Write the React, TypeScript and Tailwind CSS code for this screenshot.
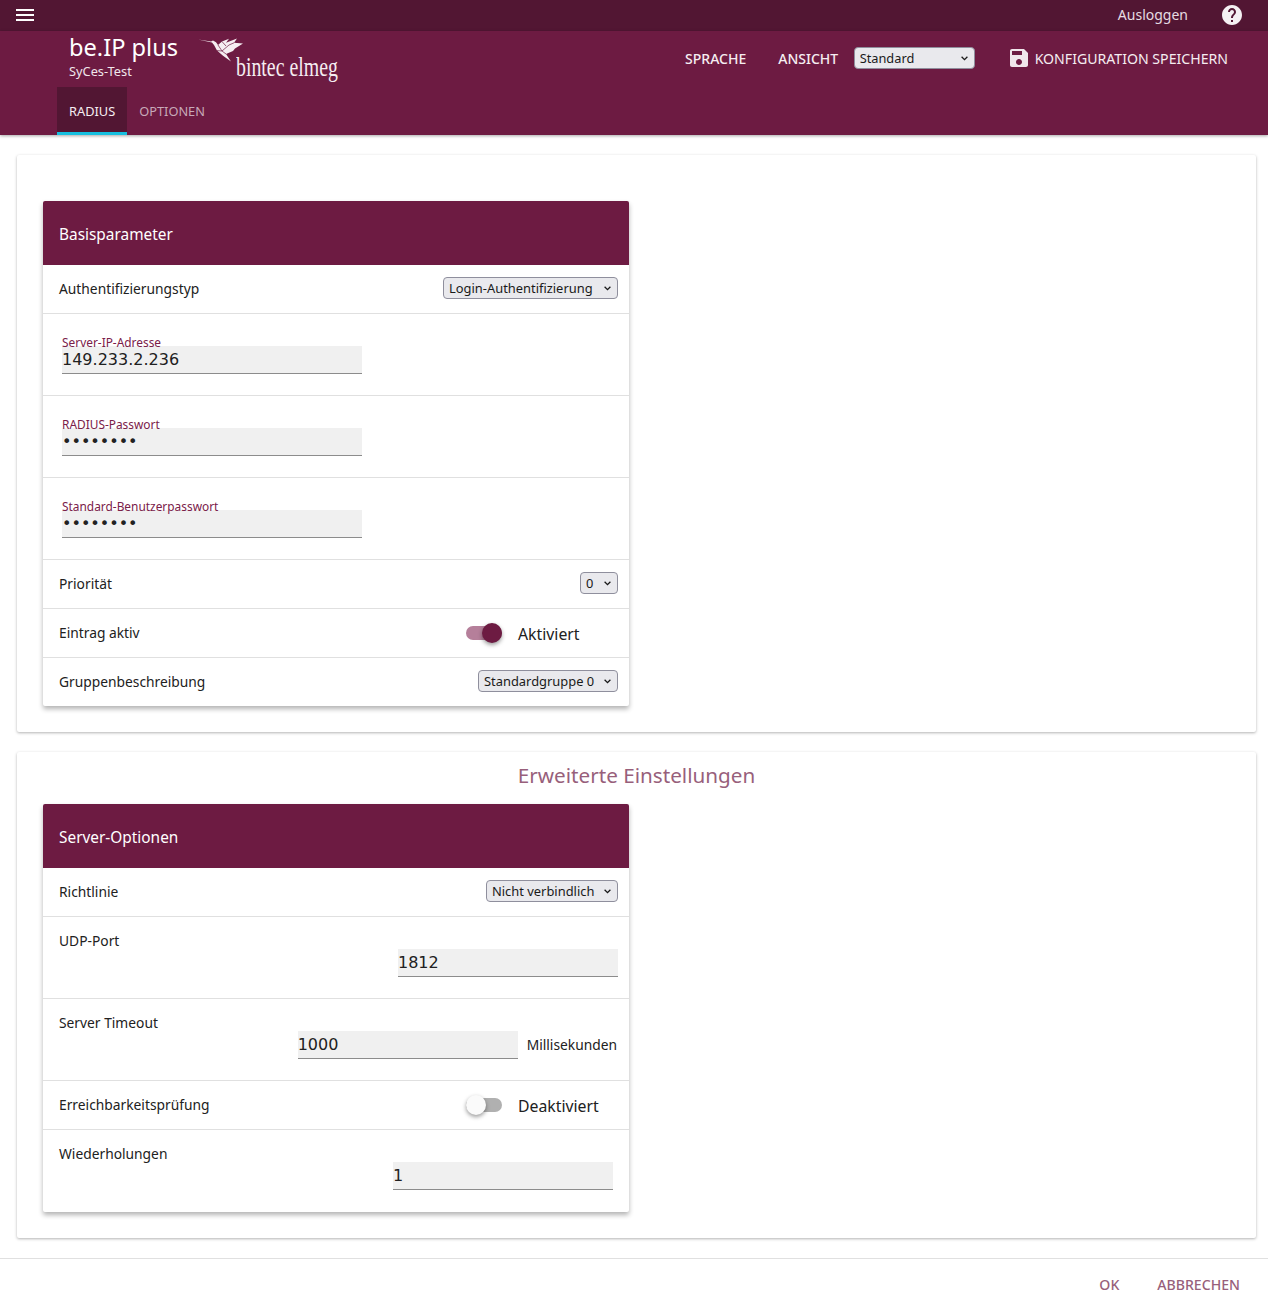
import React from "react";

const sans = "font-['Noto_Sans','Open_Sans',sans-serif]";

function Chevron() {
  return (
    <svg className="pointer-events-none absolute right-[7px] top-[9px]" width="7" height="5" viewBox="0 0 7 5" fill="none" stroke="#1a1a1a" strokeWidth="1.3">
      <path d="M0.6 0.8 L3.5 3.7 L6.4 0.8" />
    </svg>
  );
}

function NativeSelect({ value, w, size = "text-[12.9px]" }: { value: string; w: string; size?: string }) {
  return (
    <div className={`relative ${w} h-[22px]`}>
      <select
        defaultValue={value}
        className={`h-[22px] w-full appearance-none rounded-[4px] border border-[#8f8f9d] bg-[#e9e9ed] pl-[5px] pt-[1px] font-normal ${size} text-[#1a1a1a] font-['Noto_Sans',sans-serif] outline-none`}
      >
        <option>{value}</option>
      </select>
      <Chevron />
    </div>
  );
}

function Row({ label, children, last }: { label: string; children?: React.ReactNode; last?: boolean }) {
  return (
    <div className={`flex items-center justify-between pb-[2px] pl-4 pr-[11px] text-[13.8px] text-[#212121] ${last ? "h-[48px]" : "h-[49px] border-b border-[#e0e0e0]"}`}>
      <span className="mt-[2px]">{label}</span>
      {children}
    </div>
  );
}

function FloatField({ label, value, password }: { label: string; value: string; password?: boolean }) {
  return (
    <div className="h-[82px] border-b border-[#e0e0e0] pl-[19px] pt-8">
      <div className="relative w-[300px]">
        <span className="absolute -top-[12px] left-0 text-[11.9px] leading-[16px] text-[#7a2049]">{label}</span>
        <input
          readOnly
          type={password ? "password" : "text"}
          value={value}
          className="block h-[28px] w-full border-b border-[#8c8c8c] bg-[#f0f0f0] text-[16px] text-[#212121] font-['DejaVu_Sans',sans-serif] outline-none"
        />
      </div>
    </div>
  );
}

function Toggle({ on, label }: { on: boolean; label: string }) {
  return (
    <div className="mt-[2px] flex w-[152px] items-center">
      <div className={`relative h-[14px] w-9 rounded-full ${on ? "bg-[#b57f9a]" : "bg-[#b0b0b0]"}`}>
        <span
          className={`absolute -top-[3px] h-5 w-5 rounded-full shadow-[0_2px_4px_rgba(0,0,0,0.4)] ${on ? "right-0 bg-[#6d1b42]" : "left-0 bg-[#fafafa]"}`}
        />
      </div>
      <span className="ml-4 mt-1 text-[15.8px] text-[#212121]">{label}</span>
    </div>
  );
}

function NumField({ label, value, w, pr, unit, last }: { label: string; value: string; w: string; pr: string; unit?: string; last?: boolean }) {
  return (
    <div className={`flex h-[82px] justify-between pl-4 ${pr} ${last ? "" : "border-b border-[#e0e0e0]"}`}>
      <span className="pt-[14px] text-[13.8px] leading-[19px] text-[#212121]">{label}</span>
      <div className="mt-8 flex items-center self-start">
        <input
          readOnly
          value={value}
          className={`${w} block h-[28px] border-b border-[#8c8c8c] bg-[#f0f0f0] text-[16px] text-[#212121] font-['DejaVu_Sans',sans-serif] outline-none`}
        />
        {unit && <span className="ml-[9px] text-[13.8px] text-[#212121]">{unit}</span>}
      </div>
    </div>
  );
}

function Panel({ title, children }: { title: string; children: React.ReactNode }) {
  return (
    <div className="w-[586px] overflow-hidden rounded-[2px] bg-white shadow-[0_3px_5px_rgba(0,0,0,0.3)]">
      <div className="flex h-16 items-center bg-[#6d1b42] pl-4 pt-1 text-[15.4px] text-white">{title}</div>
      {children}
    </div>
  );
}

function Logo() {
  return (
    <div className="ml-[20px] flex h-[56px] w-[140px] flex-col">
      <svg width="46" height="25" viewBox="0 0 46 25" className="-mb-[11px] mt-[7px] shrink-0">
        <path d="M0 1.6 L13 3.6 L15 2.6 L18 4.2 L20 7 L24 3.6 L31 0.8 L28 4.8 L39 0.4 L36 4.8 L45 5.6 L37 10.6 L35 13 L28 16 L33 23.6 L25 17.8 L19 12.6 L16 7 L14 4.4 Z" fill="#f5edf1" />
        <path d="M20 7 L24 13 L28 16 M24 13 L31 7 M19 12.6 L24 13 M24 3.6 L28 8 M36 4.8 L31 7" stroke="#6d1b42" strokeWidth="0.7" fill="none" />
      </svg>
      <span className="ml-[38px] origin-left scale-x-[0.735] whitespace-nowrap font-['Liberation_Serif',serif] text-[27px] leading-[30px] text-[#f5edf1]">
        bintec elmeg
      </span>
    </div>
  );
}

export default function App() {
  return (
    <div className={`${sans} flex min-h-[1298px] flex-col bg-white`}>
      <div className="flex h-[31px] items-center bg-[#521633] pb-[1px] pl-[13px] pr-6">
        <svg width="24" height="24" viewBox="0 0 24 24" fill="#fff"><path d="M3 18h18v-2H3v2zm0-5h18v-2H3v2zm0-7v2h18V6H3z" /></svg>
        <span className="ml-auto -mt-[2px] text-[14px] text-[#e6dce2]">Ausloggen</span>
        <svg className="ml-[32px]" width="24" height="24" viewBox="0 0 24 24" fill="#f5f0f3">
          <path d="M12 2C6.48 2 2 6.48 2 12s4.48 10 10 10 10-4.48 10-10S17.52 2 12 2zm1 17h-2v-2h2v2zm2.07-7.75l-.9.92C13.45 12.9 13 13.5 13 15h-2v-.5c0-1.1.45-2.1 1.17-2.83l1.24-1.26c.37-.36.59-.86.59-1.41 0-1.1-.9-2-2-2s-2 .9-2 2H8c0-2.21 1.79-4 4-4s4 1.79 4 4c0 .88-.36 1.68-.93 2.25z" />
        </svg>
      </div>
      <header className="flex h-[104px] flex-col bg-[#6d1b42] shadow-[0_1px_3px_rgba(0,0,0,0.35)]">
        <div className="flex h-[56px] items-start">
          <div className="ml-[69px] flex flex-col">
            <span className="text-[23.6px] leading-[33px] text-white">be.IP plus</span>
            <span className="-mt-[1px] text-[12.8px] leading-[16px] text-[#f0e6eb]">SyCes-Test</span>
          </div>
          <Logo />
          <div className="ml-auto mt-4 flex h-[22px] items-center pr-10 text-[14px] font-medium text-[#f5edf1]">
            <span>SPRACHE</span>
            <span className="ml-8">ANSICHT</span>
            <div className="ml-[15.5px]">
              <NativeSelect value="Standard" w="w-[121px]" size="text-[12.8px]" />
            </div>
            <svg className="ml-8" width="24" height="24" viewBox="0 0 24 24" fill="#f0e6eb">
              <path d="M17 3H5c-1.11 0-2 .9-2 2v14c0 1.1.89 2 2 2h14c1.1 0 2-.9 2-2V7l-4-4zm-5 16c-1.66 0-3-1.34-3-3s1.34-3 3-3 3 1.34 3 3-1.34 3-3 3zm3-10H5V5h10v4z" />
            </svg>
            <span className="ml-[4px] mt-[2px] text-[14.12px] font-normal">KONFIGURATION SPEICHERN</span>
          </div>
        </div>
        <nav className="flex pl-[57px] text-[12.8px]">
          <div className="flex h-[48px] items-center border-b-[3px] border-[#17bfdf] bg-[#521633] px-3 pt-[5px] text-[#f5edf1]">RADIUS</div>
          <div className="flex h-[48px] items-center px-3 pb-[1px] pt-[3px] text-[#c7a9b8]">OPTIONEN</div>
        </nav>
      </header>

      <main className="flex flex-col gap-5 px-[12px] pt-5 pl-[17px]">
        <section className="rounded-[2px] px-[26px] pb-[26px] pt-[46px] shadow-[0_1px_3px_rgba(0,0,0,0.3)]">
          <Panel title="Basisparameter">
            <Row label="Authentifizierungstyp"><NativeSelect value="Login-Authentifizierung" w="w-[175px]" /></Row>
            <FloatField label="Server-IP-Adresse" value="149.233.2.236" />
            <FloatField label="RADIUS-Passwort" value="password" password />
            <FloatField label="Standard-Benutzerpasswort" value="password" password />
            <Row label="Priorität"><NativeSelect value="0" w="w-[38px]" /></Row>
            <Row label="Eintrag aktiv"><Toggle on label="Aktiviert" /></Row>
            <Row label="Gruppenbeschreibung" last><NativeSelect value="Standardgruppe 0" w="w-[140px]" /></Row>
          </Panel>
        </section>
        <section className="rounded-[2px] px-[26px] pb-[26px] shadow-[0_1px_3px_rgba(0,0,0,0.3)]">
          <h2 className="h-[52px] pt-[7px] text-center text-[20.7px] leading-[32px] text-[#985f7b]">Erweiterte Einstellungen</h2>
          <Panel title="Server-Optionen">
            <Row label="Richtlinie"><NativeSelect value="Nicht verbindlich" w="w-[132px]" /></Row>
            <NumField label="UDP-Port" value="1812" w="w-[220px]" pr="pr-[11px]" />
            <NumField label="Server Timeout" value="1000" w="w-[220px]" pr="pr-[12px]" unit="Millisekunden" />
            <Row label="Erreichbarkeitsprüfung"><Toggle on={false} label="Deaktiviert" /></Row>
            <NumField label="Wiederholungen" value="1" w="w-[220px]" pr="pr-[16px]" last />
          </Panel>
        </section>
      </main>
      <footer className="mt-5 flex h-[40px] items-center justify-end gap-[38px] border-t border-[#e0e0e0] pr-7 pt-[13px] text-[14.1px] font-medium text-[#985f7b]">
        <span>OK</span>
        <span>ABBRECHEN</span>
      </footer>
    </div>
  );
}
